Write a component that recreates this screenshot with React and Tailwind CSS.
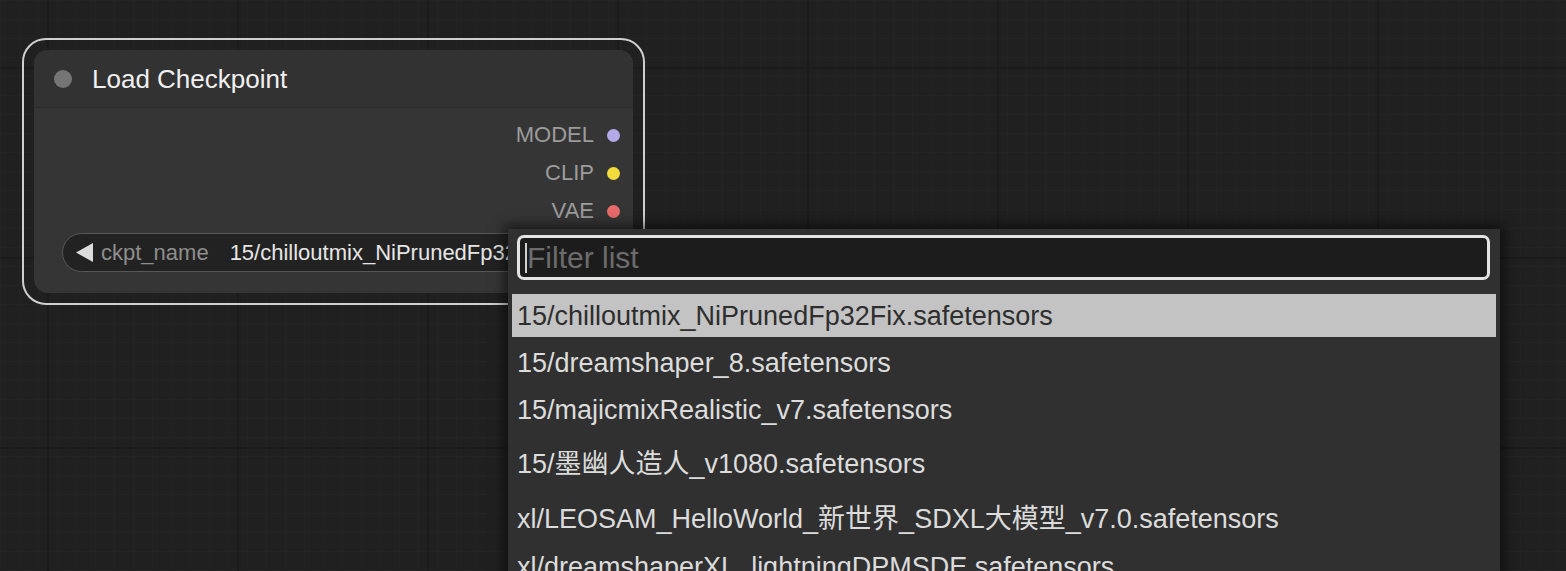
import React from "react";

const outputs = [
  { name: "MODEL", color: "bg-[#b3a9e6]" },
  { name: "CLIP", color: "bg-[#f2dc3c]" },
  { name: "VAE", color: "bg-[#e86a6a]" },
];

const files = [
  "15/chilloutmix_NiPrunedFp32Fix.safetensors",
  "15/dreamshaper_8.safetensors",
  "15/majicmixRealistic_v7.safetensors",
  "15/墨幽人造人_v1080.safetensors",
  "xl/LEOSAM_HelloWorld_新世界_SDXL大模型_v7.0.safetensors",
  "xl/dreamshaperXL_lightningDPMSDE.safetensors",
];

export default function App() {
  return (
    <div className="relative h-[571px] w-[1566px] overflow-hidden bg-[#202020] bg-[linear-gradient(to_right,#1b1b1b_2px,transparent_2px),linear-gradient(to_bottom,#1b1b1b_2px,transparent_2px),linear-gradient(to_right,#232323_1px,transparent_1px),linear-gradient(to_bottom,#232323_1px,transparent_1px)] bg-[size:190px_190px,190px_190px,19px_19px,19px_19px] bg-[position:47px_67px,47px_67px,0_0,0_0] font-['Liberation_Sans','Noto_Sans_CJK_SC',sans-serif]">
      {/* Node with selection outline */}
      <div className="absolute left-[22px] top-[38px] h-[267px] w-[623px] rounded-[24px] border-2 border-[#cfcfcf] p-[10px]">
        <div className="flex h-full flex-col rounded-[14px] bg-[#353535]">
          {/* Title */}
          <div className="flex h-[58px] items-center rounded-t-[14px] border-b border-[#2b2b2b] bg-[#323232] pl-[20px]">
            <div className="h-[18px] w-[18px] rounded-full bg-[#757575]" />
            <span className="ml-[20px] pt-[2px] text-[26px] leading-[normal] text-[#f0f0f0]">
              Load Checkpoint
            </span>
          </div>

          {/* Outputs */}
          <div className="flex flex-col items-end pr-[13px] pt-[8px]">
            {outputs.map((o) => (
              <div key={o.name} className="flex h-[38px] items-center gap-[13px]">
                <span className="text-[22px] leading-[normal] text-[#9c9c9c]">{o.name}</span>
                <span className={`h-[13px] w-[13px] rounded-full ${o.color}`} />
              </div>
            ))}
          </div>

          {/* Combo widget */}
          <div className="mx-[28px] mt-[3px] flex h-[39px] items-center overflow-hidden rounded-full border border-[#575757] bg-[#222222] pl-[13px] pr-[13px]">
            <svg width="17" height="19" viewBox="0 0 17 19" className="shrink-0">
              <polygon points="17,0 17,19 0,9.5" fill="#dcdcdc" />
            </svg>
            <span className="ml-[8px] shrink-0 text-[22px] leading-[normal] text-[#8e8e8e]">
              ckpt_name
            </span>
            <span className="ml-[21px] flex-1 truncate text-[22px] leading-[normal] text-[#e6e6e6]">
              15/chilloutmix_NiPrunedFp32Fix.safetensors
            </span>
            <svg width="17" height="19" viewBox="0 0 17 19" className="ml-[8px] shrink-0">
              <polygon points="0,0 0,19 17,9.5" fill="#dcdcdc" />
            </svg>
          </div>
        </div>
      </div>

      {/* Dropdown menu */}
      <div className="absolute left-[508px] top-[229px] h-[360px] w-[992px] bg-[#303030] px-[4px] pt-[6px] shadow-[0_0_12px_4px_rgba(0,0,0,0.55)]">
        <div className="ml-[5px] mr-[6px] flex h-[45px] items-center rounded-[7px] border-[3px] border-[#e4e4e4] bg-[#1c1c1c] pl-[5px]">
          <span className="h-[30px] w-[2px] bg-[#d0d0d0]" />
          <span className="text-[30px] leading-[normal] text-[#6c6c6c]">Filter list</span>
        </div>
        <div className="mt-[14px] flex flex-col gap-[4px]">
          {files.map((f, i) => (
            <div
              key={f}
              className={`whitespace-nowrap pb-[5px] pl-[5px] pt-[7px] text-[27px] leading-[normal] ${
                i === 0 ? "bg-[#c3c3c3] text-[#2e2e2e]" : "text-[#dcdcdc]"
              }`}
            >
              {f}
            </div>
          ))}
        </div>
      </div>
    </div>
  );
}
